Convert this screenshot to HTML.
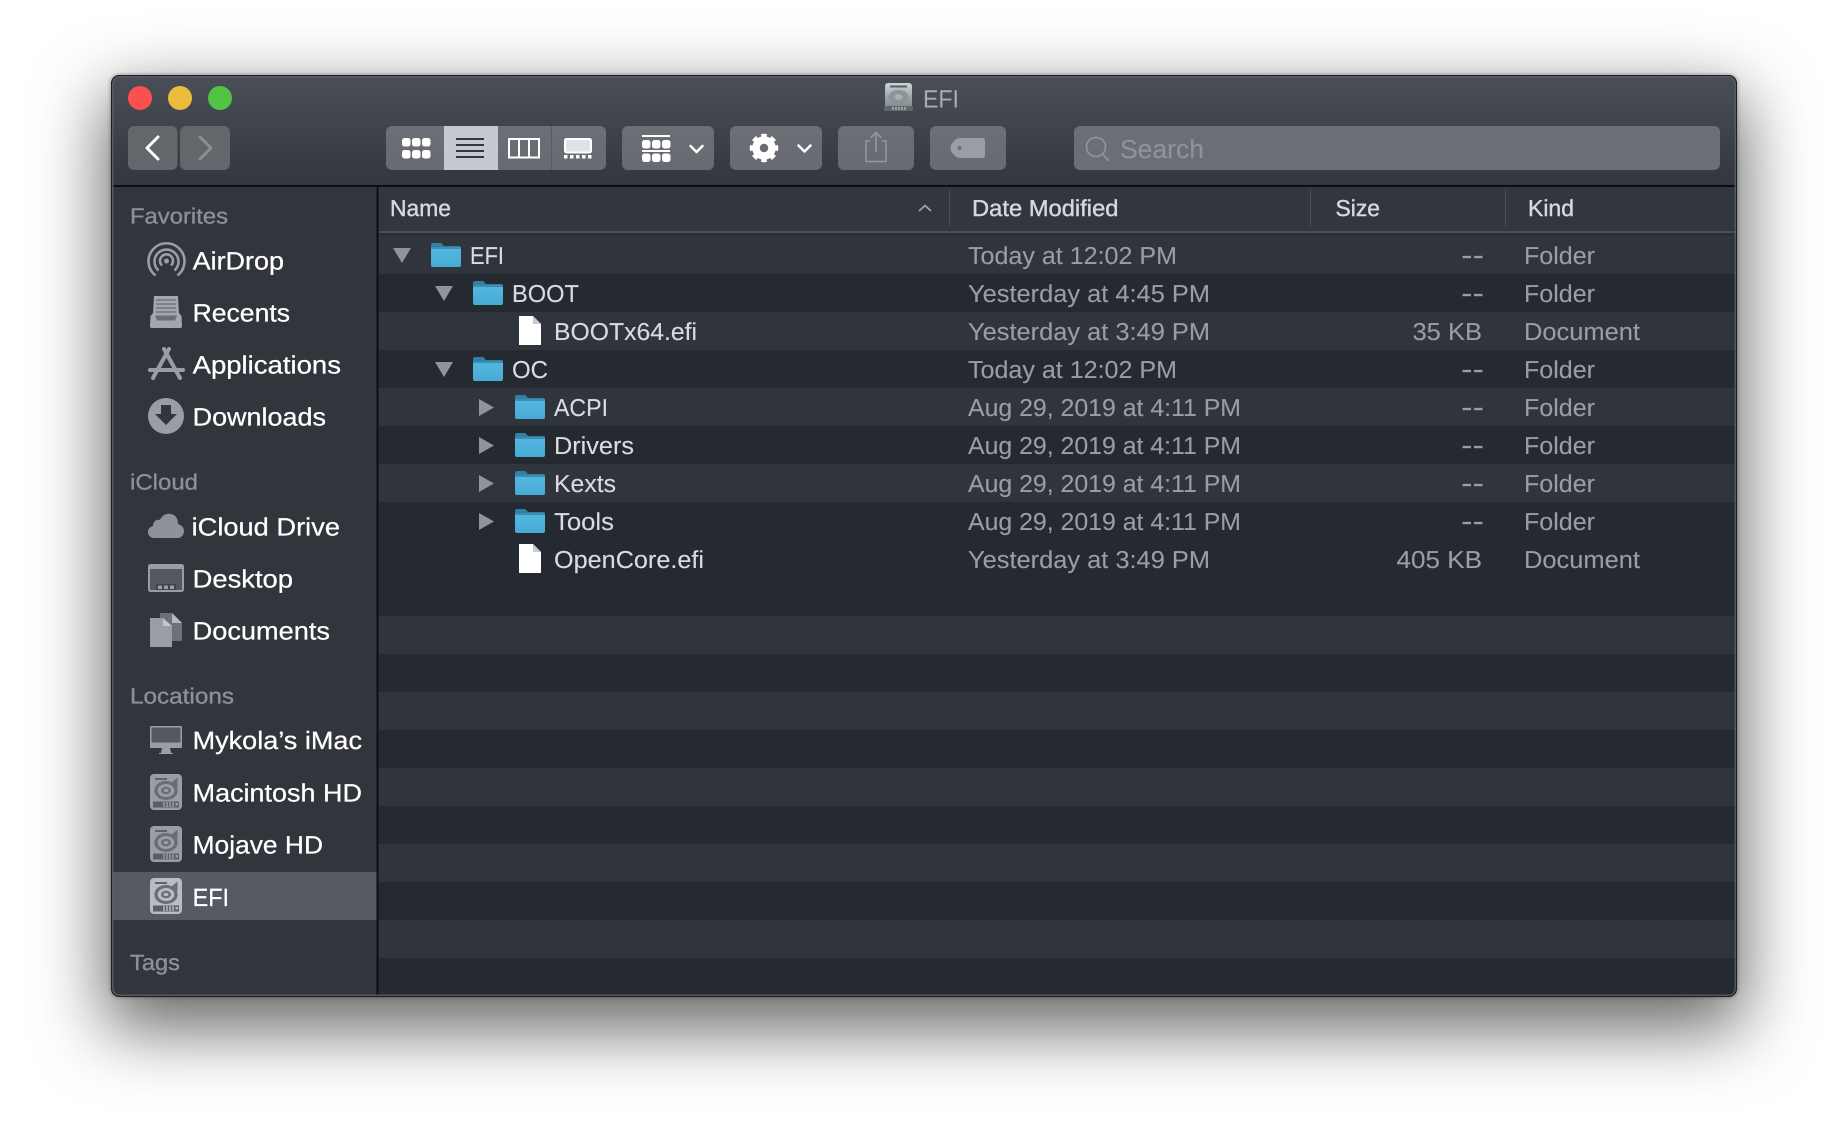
<!DOCTYPE html>
<html><head><meta charset="utf-8"><title>EFI</title>
<style>
html,body{margin:0;padding:0;background:#fff;width:1848px;height:1144px;overflow:hidden}
#sh{position:absolute;left:111px;top:75px;width:1626px;height:922px;border-radius:8px;box-shadow:0 26px 70px 6px rgba(0,0,0,.6),0 0 4px rgba(0,0,0,.4)}
svg{position:absolute;left:0;top:0}
text{font-family:"Liberation Sans",sans-serif;text-rendering:geometricPrecision}
.s{font-size:25px;fill:#fff;stroke:#fff;stroke-width:.25}
.h{font-size:22px;fill:#8d9097;stroke:#8d9097;stroke-width:.35}
.c{font-size:23px;fill:#d6d8dc;stroke:#d6d8dc;stroke-width:.4}
.n{font-size:24.5px;fill:#d9dbdf;stroke:#d9dbdf;stroke-width:.12}
.d{font-size:24.5px;fill:#9a9da1;stroke:#9a9da1;stroke-width:.1}
.m{font-size:30px;fill:#9a9da1}
</style></head><body>
<div id="sh"></div>
<svg width="1848" height="1144" viewBox="0 0 1848 1144" xmlns="http://www.w3.org/2000/svg">
<defs>
<linearGradient id="tb" x1="0" y1="0" x2="0" y2="1"><stop offset="0" stop-color="#4a4e56"/><stop offset="1" stop-color="#33373d"/></linearGradient>
<linearGradient id="bt" x1="0" y1="0" x2="0" y2="1"><stop offset="0" stop-color="#6c6f76"/><stop offset="1" stop-color="#676a71"/></linearGradient>
<linearGradient id="fb" x1="0" y1="0" x2="0" y2="1"><stop offset="0" stop-color="#54b7e0"/><stop offset="1" stop-color="#46abd6"/></linearGradient>
<linearGradient id="hd" x1="0" y1="0" x2="0" y2="1"><stop offset="0" stop-color="#d0d4d6"/><stop offset=".55" stop-color="#9aa4a6"/><stop offset="1" stop-color="#7c8486"/></linearGradient>
<clipPath id="w"><rect x="111" y="75" width="1626" height="922" rx="8"/></clipPath>
<symbol id="folder" width="30" height="24" viewBox="0 0 30 24" overflow="visible">
<path d="M0 3 Q0 0 2 0 H9 Q11 0 12 2 L13 3 H28 Q30 3 30 5 V8 H0Z" fill="#347fa6"/>
<path d="M0 5 H30 V22 Q30 24 28 24 H2 Q0 24 0 22Z" fill="url(#fb)"/>
<rect x="0" y="4" width="30" height="2" fill="#3c8db4"/>
</symbol>
<symbol id="doc" width="22" height="29" viewBox="0 0 22 29" overflow="visible">
<path d="M0 0 H14 L22 8 V29 H0Z" fill="#fff"/>
<path d="M14 0 V8 H22Z" fill="#c9cbce"/>
</symbol>
<symbol id="disk" width="32" height="36" viewBox="0 0 32 36" overflow="visible">
<rect x="0" y="0" width="32" height="36" rx="4" fill="currentColor"/>
<ellipse cx="16" cy="16.500" rx="11.700" ry="9.500" fill="#6a6d74"/>
<ellipse cx="16" cy="16.500" rx="8.300" ry="6.500" fill="currentColor"/>
<ellipse cx="16" cy="16.500" rx="5" ry="3.800" fill="#6a6d74"/>
<ellipse cx="16" cy="16.500" rx="2.400" ry="1.600" fill="currentColor"/>
<path d="M21 9 L27.500 3.500 V13Z" fill="#6a6d74"/>
<rect x="5" y="4" width="12" height="2" fill="#5f626a"/>
<rect x="3" y="27.500" width="26" height="6" fill="#5a5d64"/>
<path d="M14 28v5M17 28v5M20 28v5M23 28v5" stroke="currentColor" stroke-width="1.500"/>
<rect x="25.500" y="29" width="2.500" height="2.500" fill="currentColor"/>
</symbol>
<symbol id="tdn" width="18" height="15" viewBox="0 0 18 15" overflow="visible"><path d="M0 0H18L9 15Z" fill="#909398"/></symbol>
<symbol id="trt" width="15" height="17" viewBox="0 0 15 17" overflow="visible"><path d="M0 0L15 8.500L0 17Z" fill="#909398"/></symbol>
</defs>

<g clip-path="url(#w)">
<rect x="111" y="75" width="1626" height="110" fill="url(#tb)"/>
<rect x="111" y="185" width="1626" height="2" fill="#0d0e10"/>
<rect x="111" y="187" width="266" height="810" fill="#32353c"/>
<rect x="378" y="187" width="1359" height="44" fill="#32363d"/>
<rect x="378" y="231" width="1359" height="2" fill="#4a4e55"/>
<rect x="378" y="233" width="1359" height="3" fill="#2a2e35"/>
<rect x="378" y="236" width="1359" height="761" fill="#252930"/>
<g fill="#30343c">
<rect x="378" y="236" width="1359" height="38"/>
<rect x="378" y="312" width="1359" height="38"/>
<rect x="378" y="388" width="1359" height="38"/>
<rect x="378" y="464" width="1359" height="38"/>
<rect x="378" y="616" width="1359" height="38"/>
<rect x="378" y="692" width="1359" height="38"/>
<rect x="378" y="768" width="1359" height="38"/>
<rect x="378" y="844" width="1359" height="38"/>
<rect x="378" y="920" width="1359" height="38"/>
</g>
<rect x="112" y="872" width="264.500" height="48" fill="#565a62"/>
<rect x="376.500" y="187" width="2" height="810" fill="#0d0e10"/>
<path d="M949.500 190V226M1310.500 190V226M1505.500 190V226" stroke="#4a4e55" stroke-width="1"/>
</g>
<rect x="112.500" y="76.500" width="1623" height="919" rx="7" fill="none" stroke="#5c5f64" stroke-width="2" opacity=".85"/>
<rect x="111.500" y="75.500" width="1625" height="921" rx="8" fill="none" stroke="#1c1d20" stroke-width="1"/>

<!-- traffic lights -->
<circle cx="140" cy="98" r="12" fill="#fc4f4f"/>
<circle cx="180" cy="98" r="12" fill="#e9bc3e"/>
<circle cx="220" cy="98" r="12" fill="#52c443"/>

<!-- title -->
<g>
<rect x="885" y="83" width="27" height="27" rx="3" fill="url(#hd)"/>
<rect x="890" y="85.500" width="17" height="2" fill="#5b5f62"/>
<ellipse cx="898.500" cy="97" rx="10" ry="7" fill="#8a959b"/>
<ellipse cx="898.500" cy="97" rx="4" ry="3" fill="#a8b1b6"/>
<rect x="884" y="106" width="29" height="5" rx="1" fill="#62676a"/>
<path d="M893 107v3M896 107v3M899 107v3M902 107v3M905 107v3" stroke="#d5d8da" stroke-width="1"/>
</g>
<text x="923" y="107.500" textLength="36" lengthAdjust="spacingAndGlyphs" style="font-size:25px;fill:#a9acb3">EFI</text>

<!-- nav -->
<rect x="128" y="126" width="49.500" height="44" rx="6" fill="#63666b"/>
<rect x="180" y="126" width="50" height="44" rx="6" fill="#63666b"/>
<polyline points="158,137 147,148 158,159" fill="none" stroke="#fff" stroke-width="3" stroke-linecap="round" stroke-linejoin="round"/>
<polyline points="200,137 211,148 200,159" fill="none" stroke="#8b8e93" stroke-width="3" stroke-linecap="round" stroke-linejoin="round"/>

<!-- view segment -->
<rect x="386" y="126" width="220" height="44" rx="6" fill="url(#bt)"/>
<rect x="444" y="126" width="54" height="44" fill="#c5c9d1"/>
<rect x="551" y="126" width="1" height="44" fill="#575a61"/>
<g fill="#fff">
<rect x="402" y="138" width="8.500" height="8.500" rx="2.500"/><rect x="412" y="138" width="8.500" height="8.500" rx="2.500"/><rect x="422" y="138" width="8.500" height="8.500" rx="2.500"/>
<rect x="402" y="150" width="8.500" height="8.500" rx="2.500"/><rect x="412" y="150" width="8.500" height="8.500" rx="2.500"/><rect x="422" y="150" width="8.500" height="8.500" rx="2.500"/>
</g>
<g fill="#33363c"><rect x="456" y="138" width="28" height="2"/><rect x="456" y="144" width="28" height="2"/><rect x="456" y="150" width="28" height="2"/><rect x="456" y="156" width="28" height="2"/></g>
<rect x="509" y="139" width="30" height="18.500" fill="none" stroke="#fff" stroke-width="2"/>
<path d="M519 139v18.500M529 139v18.500" stroke="#fff" stroke-width="2"/>
<rect x="565" y="139" width="26" height="13.500" rx="1.500" fill="#dfe2ea" stroke="#fff" stroke-width="2"/>
<g fill="#fff"><rect x="564" y="155" width="3.500" height="3.500"/><rect x="570" y="155" width="3.500" height="3.500"/><rect x="576" y="155" width="3.500" height="3.500"/><rect x="582" y="155" width="3.500" height="3.500"/><rect x="588" y="155" width="3.500" height="3.500"/></g>

<!-- arrange -->
<rect x="622" y="126" width="92" height="44" rx="6" fill="url(#bt)"/>
<g fill="#fff">
<rect x="642" y="135" width="28" height="2"/>
<rect x="642" y="140" width="8.500" height="8.500" rx="2.500"/><rect x="652" y="140" width="8.500" height="8.500" rx="2.500"/><rect x="662" y="140" width="8.500" height="8.500" rx="2.500"/>
<rect x="642" y="150" width="28" height="2"/>
<rect x="642" y="153.500" width="8.500" height="8.500" rx="2.500"/><rect x="652" y="153.500" width="8.500" height="8.500" rx="2.500"/><rect x="662" y="153.500" width="8.500" height="8.500" rx="2.500"/>
</g>
<polyline points="690.500,146 696.500,152 702.500,146" fill="none" stroke="#fff" stroke-width="2.500" stroke-linecap="round" stroke-linejoin="round"/>

<!-- gear -->
<rect x="730" y="126" width="92" height="44" rx="6" fill="url(#bt)"/>
<circle cx="764" cy="148" r="8" fill="none" stroke="#fff" stroke-width="7.500"/>
<circle cx="764" cy="148" r="12" fill="none" stroke="#fff" stroke-width="4.500" stroke-dasharray="5.500 4.310" stroke-dashoffset="2.750" pathLength="78.500"/>
<polyline points="798.500,145.500 804.500,151.500 810.500,145.500" fill="none" stroke="#fff" stroke-width="2.500" stroke-linecap="round" stroke-linejoin="round"/>

<!-- share -->
<rect x="838" y="126" width="76" height="44" rx="6" fill="url(#bt)"/>
<path d="M870 141 H866 V161.500 H886 V141 H882" fill="none" stroke="#94979d" stroke-width="1.600"/>
<path d="M876 152 V133 M870.500 138 L876 132.500 L881.500 138" fill="none" stroke="#94979d" stroke-width="1.600"/>

<!-- tag -->
<rect x="930" y="126" width="76" height="44" rx="6" fill="url(#bt)"/>
<path d="M960 138 H982 Q985 138 985 141 V155 Q985 158 982 158 H960 Q957 158 954 155 L951.500 152 Q949.500 148 951.500 144 L954 141 Q957 138 960 138Z" fill="#9a9da3"/>
<circle cx="959.500" cy="148" r="2" fill="#6a6d74"/>

<!-- search -->
<rect x="1074" y="126" width="646" height="44" rx="6" fill="#6b6e75"/>
<circle cx="1096" cy="147" r="9.500" fill="none" stroke="#8f9298" stroke-width="1.800"/>
<path d="M1102.500 154 L1109 161" stroke="#8f9298" stroke-width="2"/>
<text x="1120" y="158" textLength="84" lengthAdjust="spacingAndGlyphs" style="font-size:26px;fill:#8f9298;stroke:#8f9298;stroke-width:.2">Search</text>

<!-- headers -->
<text class="c" x="390" y="216" textLength="61" lengthAdjust="spacingAndGlyphs">Name</text>
<polyline points="919,211 925,205.500 931,211" fill="none" stroke="#a3a6ab" stroke-width="1.700"/>
<text class="c" x="972" y="216" textLength="146.500" lengthAdjust="spacingAndGlyphs">Date Modified</text>
<text class="c" x="1335.500" y="216" textLength="44.500" lengthAdjust="spacingAndGlyphs">Size</text>
<text class="c" x="1528" y="216" textLength="46" lengthAdjust="spacingAndGlyphs">Kind</text>

<!-- sidebar -->
<text class="h" x="130" y="223.500" textLength="98" lengthAdjust="spacingAndGlyphs">Favorites</text>
<g fill="none" stroke="#9a9da3" stroke-width="2.600">
<path d="M155.500 275.500 A18 18 0 1 1 177.500 275.500"/>
<path d="M158.500 270.500 A12 12 0 1 1 174.500 270.500"/>
<path d="M162 265.500 A6.500 6.500 0 1 1 171 265.500"/>
</g><circle cx="166.500" cy="261" r="2.500" fill="#9a9da3"/>
<text class="s" x="192.600" y="269.500" textLength="91.400" lengthAdjust="spacingAndGlyphs">AirDrop</text>

<path d="M154 296 H178 L179 314 H153Z" fill="#a3a6ac"/>
<path d="M156 300H176M156 304H176M156 308H176M156 312H176" stroke="#6a6d74" stroke-width="1.300"/>
<path d="M150.500 316 L153 313 H179 L181.500 316 L182 326 Q182 328 180 328 H152 Q150 328 150 326Z" fill="#a3a6ac"/>
<path d="M155 315.500 H177 L175 320.500 H157Z" fill="#6a6d74"/>
<text class="s" x="192.600" y="321.300" textLength="97.400" lengthAdjust="spacingAndGlyphs">Recents</text>

<g stroke="#9a9da3" fill="none" stroke-linecap="round">
<path d="M164 349 L180 378" stroke-width="4"/>
<path d="M169 349 L153 378" stroke-width="4"/>
<path d="M150 370 H183" stroke-width="4"/>
</g>
<text class="s" x="192.600" y="373.300" textLength="148.400" lengthAdjust="spacingAndGlyphs">Applications</text>

<circle cx="166" cy="416" r="18" fill="#9a9da3"/>
<path d="M161 405 H171 V414 H177 L166 425 L155 414 H161Z" fill="#32353c"/>
<text class="s" x="192.600" y="425.300" textLength="133.400" lengthAdjust="spacingAndGlyphs">Downloads</text>

<text class="h" x="130" y="489.300" textLength="68" lengthAdjust="spacingAndGlyphs">iCloud</text>
<path d="M154 538 C150 538 148 535 148 532 C148 529 150 527 153 526 C153 521 157 519 160 520 C162 515 167 513 171 514 C176 515 178 519 178 524 C182 525 184 528 184 531 C184 535 181 538 178 538Z" fill="#8f9299"/>
<text class="s" x="191.600" y="535.300" textLength="148.400" lengthAdjust="spacingAndGlyphs">iCloud Drive</text>

<rect x="148" y="564" width="36" height="28" rx="2.500" fill="#9a9da3"/>
<rect x="150" y="569" width="32" height="21" fill="#55585f"/>
<rect x="156" y="584" width="20" height="6" fill="#3f4248"/>
<g fill="#9a9da3"><rect x="158" y="585.500" width="4" height="3.500"/><rect x="164" y="585.500" width="4" height="3.500"/><rect x="170" y="585.500" width="4" height="3.500"/></g>
<text class="s" x="192.600" y="587.300" textLength="100.400" lengthAdjust="spacingAndGlyphs">Desktop</text>

<path d="M160 613 H172 L182 623 V641 H172 V628 L164 619 H160Z" fill="#6d7077"/>
<path d="M172 613 L182 623 H172Z" fill="#b4b7bc"/>
<path d="M150 618 H163 V626 H172 V647 H150Z" fill="#9a9da3"/>
<path d="M163 618 L172 626 H163Z" fill="#c4c6ca"/>
<text class="s" x="192.600" y="639.300" textLength="137.400" lengthAdjust="spacingAndGlyphs">Documents</text>

<text class="h" x="130" y="703.500" textLength="104" lengthAdjust="spacingAndGlyphs">Locations</text>
<rect x="150" y="726" width="32" height="22" rx="1" fill="#9a9da3"/>
<rect x="151.500" y="727.500" width="29" height="15" fill="#55585f"/>
<path d="M162 748 H170 L171 753 H173 V754 H159 V753 H161Z" fill="#9a9da3"/>
<text class="s" x="192.600" y="749.200" textLength="169.400" lengthAdjust="spacingAndGlyphs">Mykola’s iMac</text>

<use href="#disk" x="150" y="774" color="#9a9da3"/>
<text class="s" x="192.600" y="801.500" textLength="169.400" lengthAdjust="spacingAndGlyphs">Macintosh HD</text>
<use href="#disk" x="150" y="826" color="#9a9da3"/>
<text class="s" x="192.600" y="853.500" textLength="130.400" lengthAdjust="spacingAndGlyphs">Mojave HD</text>
<use href="#disk" x="150" y="878" color="#b9bcc2"/>
<text class="s" x="192.600" y="906" textLength="36.400" lengthAdjust="spacingAndGlyphs">EFI</text>
<text class="h" x="130" y="970" textLength="50" lengthAdjust="spacingAndGlyphs">Tags</text>

<!-- rows -->
<use href="#tdn" x="393" y="248"/><use href="#folder" x="431" y="243"/>
<text class="n" x="470" y="264" textLength="34" lengthAdjust="spacingAndGlyphs">EFI</text>
<text class="d" x="968" y="264" textLength="209" lengthAdjust="spacingAndGlyphs">Today at 12:02 PM</text>
<text class="m" x="1461" y="265" textLength="23" lengthAdjust="spacingAndGlyphs">--</text>
<text class="d" x="1524" y="264" textLength="71" lengthAdjust="spacingAndGlyphs">Folder</text>

<use href="#tdn" x="435" y="286"/><use href="#folder" x="473" y="281"/>
<text class="n" x="512" y="302" textLength="67" lengthAdjust="spacingAndGlyphs">BOOT</text>
<text class="d" x="968" y="302" textLength="242" lengthAdjust="spacingAndGlyphs">Yesterday at 4:45 PM</text>
<text class="m" x="1461" y="303" textLength="23" lengthAdjust="spacingAndGlyphs">--</text>
<text class="d" x="1524" y="302" textLength="71" lengthAdjust="spacingAndGlyphs">Folder</text>

<use href="#doc" x="519" y="316"/>
<text class="n" x="554" y="340" textLength="143" lengthAdjust="spacingAndGlyphs">BOOTx64.efi</text>
<text class="d" x="968" y="340" textLength="242" lengthAdjust="spacingAndGlyphs">Yesterday at 3:49 PM</text>
<text class="d" x="1412.500" y="340" textLength="69.500" lengthAdjust="spacingAndGlyphs">35 KB</text>
<text class="d" x="1524" y="340" textLength="116" lengthAdjust="spacingAndGlyphs">Document</text>

<use href="#tdn" x="435" y="362"/><use href="#folder" x="473" y="357"/>
<text class="n" x="512" y="378" textLength="36" lengthAdjust="spacingAndGlyphs">OC</text>
<text class="d" x="968" y="378" textLength="209" lengthAdjust="spacingAndGlyphs">Today at 12:02 PM</text>
<text class="m" x="1461" y="379" textLength="23" lengthAdjust="spacingAndGlyphs">--</text>
<text class="d" x="1524" y="378" textLength="71" lengthAdjust="spacingAndGlyphs">Folder</text>

<use href="#trt" x="479" y="399"/><use href="#folder" x="515" y="395"/>
<text class="n" x="554" y="416" textLength="54" lengthAdjust="spacingAndGlyphs">ACPI</text>
<text class="d" x="968" y="416" textLength="273" lengthAdjust="spacingAndGlyphs">Aug 29, 2019 at 4:11 PM</text>
<text class="m" x="1461" y="417" textLength="23" lengthAdjust="spacingAndGlyphs">--</text>
<text class="d" x="1524" y="416" textLength="71" lengthAdjust="spacingAndGlyphs">Folder</text>

<use href="#trt" x="479" y="437"/><use href="#folder" x="515" y="433"/>
<text class="n" x="554" y="454" textLength="80" lengthAdjust="spacingAndGlyphs">Drivers</text>
<text class="d" x="968" y="454" textLength="273" lengthAdjust="spacingAndGlyphs">Aug 29, 2019 at 4:11 PM</text>
<text class="m" x="1461" y="455" textLength="23" lengthAdjust="spacingAndGlyphs">--</text>
<text class="d" x="1524" y="454" textLength="71" lengthAdjust="spacingAndGlyphs">Folder</text>

<use href="#trt" x="479" y="475"/><use href="#folder" x="515" y="471"/>
<text class="n" x="554" y="492" textLength="62" lengthAdjust="spacingAndGlyphs">Kexts</text>
<text class="d" x="968" y="492" textLength="273" lengthAdjust="spacingAndGlyphs">Aug 29, 2019 at 4:11 PM</text>
<text class="m" x="1461" y="493" textLength="23" lengthAdjust="spacingAndGlyphs">--</text>
<text class="d" x="1524" y="492" textLength="71" lengthAdjust="spacingAndGlyphs">Folder</text>

<use href="#trt" x="479" y="513"/><use href="#folder" x="515" y="509"/>
<text class="n" x="554" y="530" textLength="60" lengthAdjust="spacingAndGlyphs">Tools</text>
<text class="d" x="968" y="530" textLength="273" lengthAdjust="spacingAndGlyphs">Aug 29, 2019 at 4:11 PM</text>
<text class="m" x="1461" y="531" textLength="23" lengthAdjust="spacingAndGlyphs">--</text>
<text class="d" x="1524" y="530" textLength="71" lengthAdjust="spacingAndGlyphs">Folder</text>

<use href="#doc" x="519" y="544"/>
<text class="n" x="554" y="568" textLength="150" lengthAdjust="spacingAndGlyphs">OpenCore.efi</text>
<text class="d" x="968" y="568" textLength="242" lengthAdjust="spacingAndGlyphs">Yesterday at 3:49 PM</text>
<text class="d" x="1396.500" y="568" textLength="85.500" lengthAdjust="spacingAndGlyphs">405 KB</text>
<text class="d" x="1524" y="568" textLength="116" lengthAdjust="spacingAndGlyphs">Document</text>
</svg>
</body></html>
